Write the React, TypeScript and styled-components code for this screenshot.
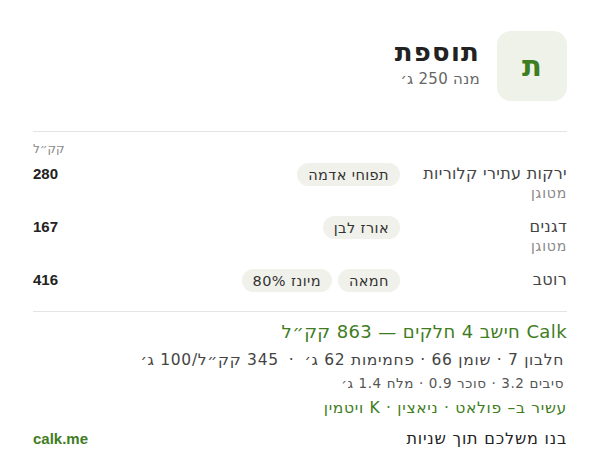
import React from "react";
import styled, { createGlobalStyle } from "styled-components";

const GlobalStyle = createGlobalStyle`
  html, body {
    margin: 0;
    padding: 0;
    background: #ffffff;
  }
  body {
    font-family: "DejaVu Sans", "Liberation Sans", sans-serif;
    color: #222222;
  }
`;

const GREEN = "#3f7d23";
const LATIN = `"Liberation Sans", Arial, sans-serif`;

const Card = styled.div`
  box-sizing: border-box;
  width: 600px;
  padding: 31px 33px 0 33px;
  direction: rtl;
`;

const Header = styled.header`
  display: flex;
  align-items: flex-start;
  gap: 17px;
  margin-bottom: 30px;
`;

const Badge = styled.div`
  width: 70px;
  height: 70px;
  border-radius: 14px;
  background: #eef2e8;
  color: ${GREEN};
  display: flex;
  align-items: center;
  justify-content: center;
  font-size: 29px;
  font-weight: 700;
`;

const TitleBlock = styled.div`
  display: flex;
  flex-direction: column;
  gap: 3px;
  padding-top: 6px;
`;

const Title = styled.h1`
  margin: 0;
  font-size: 26px;
  line-height: 30px;
  letter-spacing: 1.2px;
  font-weight: 700;
  color: #222;
`;

const Subtitle = styled.div`
  font-size: 15px;
  line-height: 18px;
  letter-spacing: 0.3px;
  color: #666;
`;

const Divider = styled.hr`
  border: 0;
  border-top: 1px solid #e4e4e4;
  margin: 0;
`;

const UnitRow = styled.div`
  display: flex;
  justify-content: flex-end;
  margin-top: 10px;
  margin-bottom: 7px;
  font-size: 12px;
  line-height: 14px;
  color: #888;
`;

const Rows = styled.div`
  display: flex;
  flex-direction: column;
  gap: 15px;
  margin-bottom: 19px;
`;

const Row = styled.div`
  display: grid;
  grid-template-columns: 155px 1fr auto;
  column-gap: 12px;
  align-items: start;
`;

const LabelCol = styled.div`
  display: flex;
  flex-direction: column;
`;

const Label = styled.div`
  font-size: 16px;
  line-height: 22px;
  letter-spacing: 0.3px;
  color: #444;
`;

const SubLabel = styled.div`
  font-size: 14px;
  line-height: 16px;
  letter-spacing: 0.8px;
  color: #888;
`;

const Chips = styled.div`
  display: flex;
  gap: 6px;
  flex-wrap: wrap;
`;

const Chip = styled.span`
  display: inline-flex;
  align-items: center;
  height: 23px;
  padding: 0 11px;
  border-radius: 12px;
  background: #f1f1eb;
  font-size: 14.5px;
  letter-spacing: 0.4px;
  color: #333;
`;

const Kcal = styled.div`
  font-family: ${LATIN};
  font-size: 15px;
  line-height: 22px;
  font-weight: 700;
  color: #222;
`;

const Summary = styled.section`
  display: flex;
  flex-direction: column;
  margin-top: 9px;
`;

const SummaryTitle = styled.div`
  font-size: 18px;
  line-height: 22px;
  letter-spacing: 0.4px;
  color: ${GREEN};
`;

const Macros = styled.div<{ $small?: boolean }>`
  padding-right: 3px;
  margin-top: ${(p) => (p.$small ? "4px" : "7px")};
  font-size: ${(p) => (p.$small ? "13.5px" : "15.5px")};
  line-height: ${(p) => (p.$small ? "18px" : "20px")};
  letter-spacing: ${(p) => (p.$small ? "0.6px" : "0.7px")};
  color: ${(p) => (p.$small ? "#555" : "#444")};
`;

const WideDot = styled.span`
  padding: 0 10px;
`;

const Rich = styled.div`
  margin-top: 6px;
  font-size: 15.5px;
  line-height: 20px;
  letter-spacing: 0.7px;
  color: ${GREEN};
`;

const Footer = styled.footer`
  display: flex;
  justify-content: space-between;
  align-items: center;
  margin-top: 11px;
  line-height: 20px;
`;

const Tagline = styled.span`
  font-size: 16px;
  letter-spacing: 0.8px;
  color: #222;
`;

const Brand = styled.span`
  font-family: ${LATIN};
  font-size: 15px;
  color: ${GREEN};
  font-weight: 700;
`;

type Item = { label: string; sub?: string; chips: string[]; kcal: number };

const items: Item[] = [
  { label: "ירקות עתירי קלוריות", sub: "מטוגן", chips: ["תפוחי אדמה"], kcal: 280 },
  { label: "דגנים", sub: "מטוגן", chips: ["אורז לבן"], kcal: 167 },
  { label: "רוטב", chips: ["חמאה", "מיונז 80%"], kcal: 416 },
];

export default function App() {
  return (
    <>
      <GlobalStyle />
      <Card dir="rtl">
        <Header>
          <Badge>ת</Badge>
          <TitleBlock>
            <Title>תוספת</Title>
            <Subtitle>מנה 250 ג׳</Subtitle>
          </TitleBlock>
        </Header>
        <Divider />
        <UnitRow>קק״ל</UnitRow>
        <Rows>
          {items.map((it) => (
            <Row key={it.label}>
              <LabelCol>
                <Label>{it.label}</Label>
                {it.sub && <SubLabel>{it.sub}</SubLabel>}
              </LabelCol>
              <Chips>
                {it.chips.map((c) => (
                  <Chip key={c}>{c}</Chip>
                ))}
              </Chips>
              <Kcal>{it.kcal}</Kcal>
            </Row>
          ))}
        </Rows>
        <Divider />
        <Summary>
          <SummaryTitle>Calk חישב 4 חלקים — 863 קק״ל</SummaryTitle>
          <Macros>
            חלבון 7 · שומן 66 · פחמימות 62 ג׳<WideDot>·</WideDot>345 קק״ל/100 ג׳
          </Macros>
          <Macros $small>סיבים 3.2 · סוכר 0.9 · מלח 1.4 ג׳</Macros>
          <Rich>עשיר ב– פולאט · ניאצין · K ויטמין</Rich>
        </Summary>
        <Footer>
          <Tagline>בנו משלכם תוך שניות</Tagline>
          <Brand>calk.me</Brand>
        </Footer>
      </Card>
    </>
  );
}
